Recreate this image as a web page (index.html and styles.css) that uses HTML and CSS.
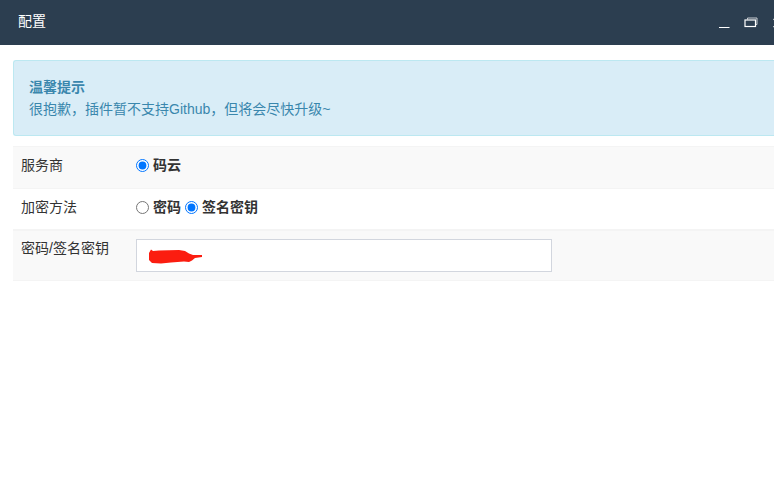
FILE: index.html
```html
<!DOCTYPE html>
<html lang="zh-CN">
<head>
<meta charset="utf-8">
<title>配置</title>
<link rel="stylesheet" href="styles.css">
</head>
<body>
<header class="titlebar">
  <span class="title">配置</span>
  <div class="controls">
    <svg class="ctl ctl-min" width="12" height="12" viewBox="0 0 12 12"><path d="M0 10.500H10.500" stroke="#fff" stroke-width="1"/></svg>
    <svg class="ctl ctl-max" width="14" height="12" viewBox="0 0 14 12"><path d="M3.500 2.500V1H13V7.500H11.500" fill="none" stroke="#c8ccd2" stroke-width="1"/><rect x="1" y="3" width="10.500" height="6.500" fill="none" stroke="#fff" stroke-width="1.200"/></svg>
    <svg class="ctl ctl-close" width="12" height="12" viewBox="0 0 12 12"><path d="M1.500 2 9.500 10M9.500 2 1.500 10" stroke="#fff" stroke-width="1.100"/></svg>
  </div>
</header>
<main class="content">
  <div class="alert">
    <div class="alert-title">温馨提示</div>
    <div>很抱歉，插件暂不支持Github，但将会尽快升级~</div>
  </div>
  <div class="form-row row-a">
    <div class="label">服务商</div>
    <div class="field">
      <label class="radio"><input type="radio" name="vendor" checked>码云</label>
    </div>
  </div>
  <div class="form-row row-b">
    <div class="label">加密方法</div>
    <div class="field">
      <label class="radio"><input type="radio" name="method">密码</label>
      <label class="radio"><input type="radio" name="method" checked>签名密钥</label>
    </div>
  </div>
  <div class="form-row row-c">
    <div class="label">密码/签名密钥</div>
    <div class="field">
      <div class="input">
        <svg class="scribble" width="54" height="16" viewBox="0 0 54 16"><path d="M0 5 2 1.500 4 3 10 2.500 30 2 36 3 40 5.500 44 7 53 7 53 9 46 10 43 12.500 40 14 35 13.500 22 14.500 12 15.500 3 15 0 12Z" fill="#fb1d10"/></svg>
      </div>
    </div>
  </div>
</main>
</body>
</html>
```

FILE: styles.css
```css
* { box-sizing: border-box; }
html, body { margin: 0; padding: 0; height: 100%; }
body {
  background: #fff;
  overflow: hidden;
  font-family: "Liberation Sans", "Noto Sans CJK SC", sans-serif;
  font-size: 14px;
  line-height: 20px;
  color: #333;
}
.titlebar {
  display: flex;
  align-items: center;
  justify-content: space-between;
  height: 45px;
  padding: 0 0 3px 18px;
  background: #2c3e50;
  color: #fff;
  overflow: hidden;
}
.title { font-size: 14px; }
.controls {
  display: flex;
  align-items: center;
  gap: 14px;
  margin-right: -10px;
  margin-top: 3px;
}
.ctl { display: block; }
.ctl-max { margin-left: -1px; }
.content { padding: 15px 0 0 13px; }
.alert {
  height: 76px;
  margin-bottom: 10px;
  padding: 15px 15px;
  background: #d9edf7;
  border: 1px solid #bce8f1;
  border-right: 0;
  border-radius: 3px 0 0 3px;
  color: #3a87ad;
  line-height: 22px;
}
.alert-title { font-weight: bold; }
.form-row {
  display: flex;
  border-bottom: 1px solid #f4f4f4;
}
.row-a, .row-c { background: #f9f9f9; }
.row-a { height: 43px; border-top: 1px solid #f4f4f4; }
.row-b { height: 41px; background: #fff; }
.row-c { height: 51px; border-top: 1px solid #f4f4f4; }
.label {
  width: 123px;
  padding: 8px 0 0 8px;
  flex: none;
}
.row-c .label { padding-top: 7px; }
.field {
  display: flex;
  align-items: flex-start;
  gap: 4px;
  padding-top: 8px;
}
.radio {
  display: flex;
  align-items: center;
  font-weight: bold;
}
.radio input {
  width: 13px;
  height: 13px;
  margin: 0 4px 0 0;
  accent-color: #0075ff;
}
.input {
  display: flex;
  align-items: center;
  width: 416px;
  height: 33px;
  padding-left: 12px;
  background: #fff;
  border: 1px solid #d2d6de;
}
.scribble { display: block; }
```
